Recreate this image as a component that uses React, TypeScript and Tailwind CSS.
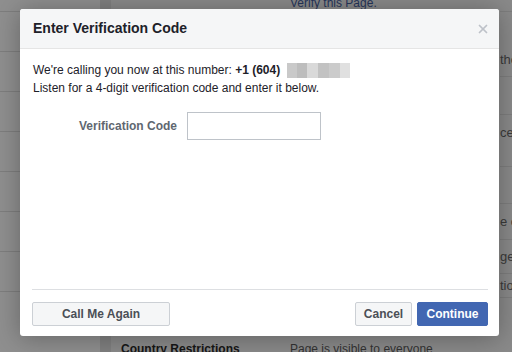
import { X } from 'lucide-react'

const font = { fontFamily: '"Liberation Sans", Arial, sans-serif' }

function NavRow({ h = 'h-10' }: { h?: string }) {
  return <div className={`${h} border-b border-[#7e7e7e]`} />
}

export default function App() {
  return (
    <div className="relative h-[352px] w-[512px] overflow-hidden bg-[#8a8a8a]" style={font}>
      {/* page behind the overlay */}
      <div className="flex h-full">
        <div className="w-[100px] shrink-0 bg-[#8f8f8f]">
          <NavRow h="h-[12px]" />
          <NavRow />
          <NavRow />
          <NavRow />
          <NavRow />
          <NavRow />
          <NavRow />
          <NavRow />
        </div>
        <div className="w-[11px] shrink-0 bg-[#808080]" />
        <div className="relative flex-1 text-[12px]">
          <div className="-mt-[6px] ml-[179px] text-[#26355a]">Verify this Page.</div>
          <div className="absolute bottom-[-6px] left-[10px] flex">
            <span className="w-[169px] font-bold text-[#161616]">Country Restrictions</span>
            <span className="text-[#333]">Page is visible to everyone</span>
          </div>
          <div className="absolute left-[389px] top-0 w-[40px] text-[13px] leading-[15px] text-[#3a3a3a]">
            <div className="h-[12px] border-b border-[#7e7e7e]" />
            <div className="h-[65px] border-b border-[#7e7e7e] pt-[40px]">the</div>
            <div className="h-[38px] border-b border-[#7e7e7e]" />
            <div className="h-[52px] border-b border-[#7e7e7e] pt-[10px]">ce</div>
            <div className="h-[37px] border-b border-[#7e7e7e]" />
            <div className="flex h-[36px] items-center border-b border-[#7e7e7e]">e c</div>
            <div className="flex h-[34px] items-center border-b border-[#7e7e7e]">ge</div>
            <div className="flex h-[24px] items-center border-b border-[#7e7e7e]">tio</div>
          </div>
        </div>
      </div>

      {/* dialog */}
      <div className="absolute left-[20px] top-[9px] flex h-[327px] w-[479px] flex-col overflow-hidden rounded-[3px] bg-white shadow-[0_2px_26px_rgba(0,0,0,0.3)]">
        <div className="flex h-[40px] shrink-0 items-center justify-between border-b border-[#e5e5e5] bg-[#f5f6f7] pl-[13px] pr-[9px]">
          <span className="text-[14px] font-bold text-[#1d2129]">Enter Verification Code</span>
          <X size={14} strokeWidth={3} className="text-[#bec2c9]" />
        </div>
        <div className="flex-1 px-[13px] pt-[12px] text-[12px] leading-[18px] text-[#1d2129]">
          <div className="flex items-center">
            <span>
              We're calling you now at this number: <b>+1 (604)</b>
            </span>
            <span className="ml-[7px] flex h-[15px]">
              <span className="w-[10px] bg-[#c9c9c9]" />
              <span className="w-[10px] bg-[#bdbdbd]" />
              <span className="w-[11px] bg-[#d9d9d9]" />
              <span className="w-[11px] bg-[#c2c2c2]" />
              <span className="w-[11px] bg-[#cbcbcb]" />
              <span className="w-[10px] bg-[#e0e0e0]" />
            </span>
          </div>
          <div>Listen for a 4-digit verification code and enter it below.</div>
          <div className="mt-[15px] flex items-center">
            <label className="w-[154px] pr-[10px] text-right font-bold text-[#606770]">
              Verification Code
            </label>
            <input className="h-[28px] w-[134px] border border-[#bec3c9] outline-none" />
          </div>
        </div>
        <div className="ml-[12px] mr-[11px] flex h-[47px] shrink-0 items-start justify-between border-t border-[#dddfe2] pt-[12px] text-[12px] font-bold">
          <button className="h-[24px] w-[138px] rounded-[2px] border border-[#ccd0d5] bg-[#f5f6f7] text-[#4b4f56]">
            Call Me Again
          </button>
          <div className="flex gap-[5px]">
            <button className="h-[24px] w-[57px] rounded-[2px] border border-[#ccd0d5] bg-[#f5f6f7] text-[#4b4f56]">
              Cancel
            </button>
            <button className="h-[24px] w-[71px] rounded-[2px] border border-[#4267b2] bg-[#4267b2] text-white">
              Continue
            </button>
          </div>
        </div>
      </div>
    </div>
  )
}
